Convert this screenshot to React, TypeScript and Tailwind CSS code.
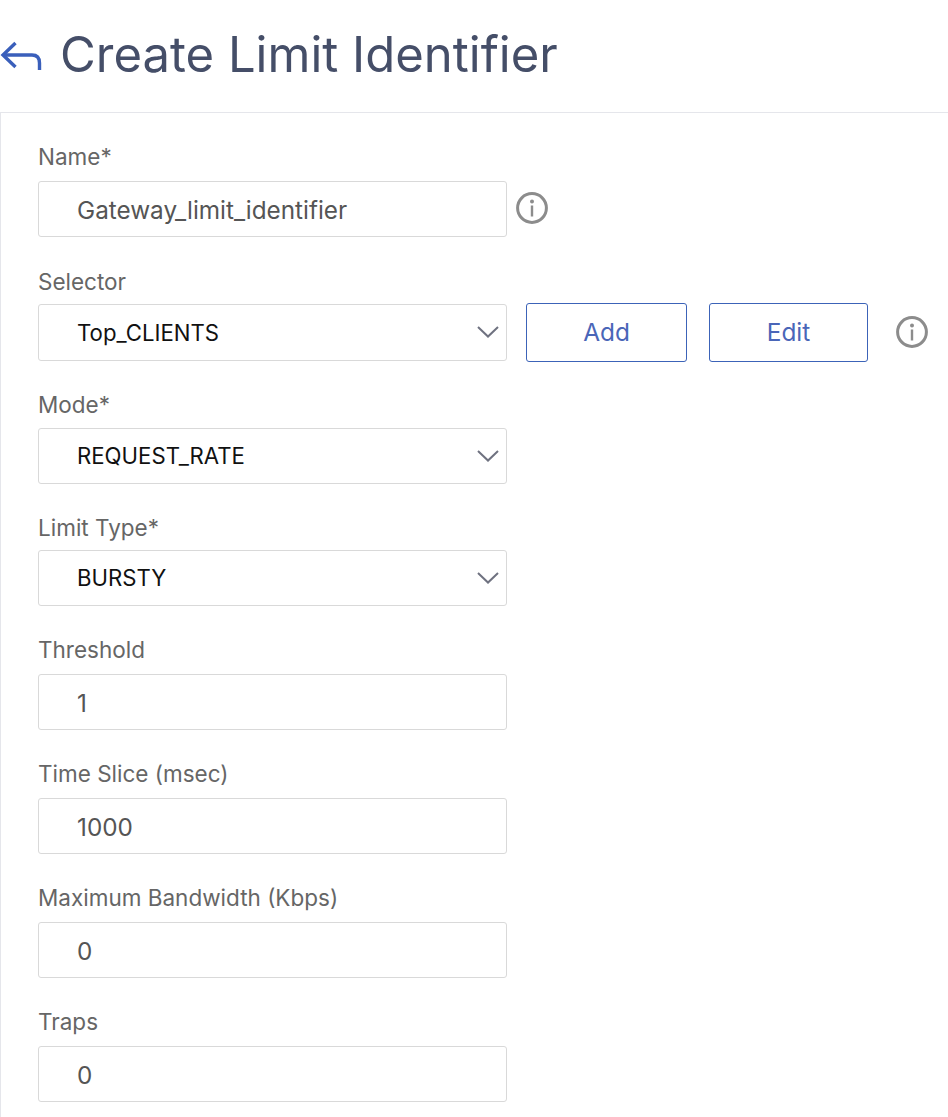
const font = { fontFamily: 'Inter, "Liberation Sans", sans-serif' };

function Info() {
  return (
    <svg width="32" height="32" viewBox="0 0 32 32" fill="none" className="block shrink-0">
      <circle cx="16" cy="16" r="14.4" stroke="#8c8c8c" strokeWidth="3" />
      <circle cx="16" cy="9.5" r="2" fill="#8c8c8c" />
      <rect x="14.8" y="13.5" width="2.4" height="11" fill="#8c8c8c" />
    </svg>
  );
}

function Chevron() {
  return (
    <svg width="22" height="12" viewBox="0 0 22 12" fill="none" className="absolute right-[7px] top-[21px]">
      <path d="M1 1 L11 10.5 L21 1" stroke="#6f7280" strokeWidth="2" />
    </svg>
  );
}

function Field({ label, value, select, h = 56, gap, children, mb }: { label: string; value: string; select?: boolean; h?: number; gap: string; children?: React.ReactNode; mb: string }) {
  return (
    <div className={mb}>
      <div className={`text-[22.5px] leading-[28px] text-[#666666] ${gap}`}>{label}</div>
      <div className="flex items-center">
        <div
          className={`relative w-[469px] shrink-0 flex items-center pl-[38px] border border-[#d9d9d9] rounded-[3px] bg-white ${select ? 'text-[22.2px] text-[#111111]' : 'text-[24.3px] text-[#555555] pt-[2px]'}`}
          style={{ height: h }}
        >
          {value}
          {select && <Chevron />}
        </div>
        {children}
      </div>
    </div>
  );
}

function Btn({ w, ml, children }: { w: string; ml: string; children: string }) {
  return (
    <button className={`${w} ${ml} h-[59px] shrink-0 border border-[#3c63b8] rounded-[3px] bg-white text-[#4a66b8] text-[24.4px]`}>
      {children}
    </button>
  );
}

export default function App() {
  return (
    <div className="w-[948px] h-[1117px] bg-white overflow-hidden" style={font}>
      <div className="h-[113px] flex items-center border-b border-[#e5e6eb]">
        <svg width="44" height="32" viewBox="0 0 44 32" fill="none" className="mt-[2px] shrink-0">
          <path d="M15.5 2 L3 14 L15.5 26" stroke="#3a5fbb" strokeWidth="3.4" />
          <path d="M3 14 H32 Q39.5 14 39.5 22 V29" stroke="#3a5fbb" strokeWidth="3.4" />
        </svg>
        <h1 className="ml-[16px] text-[49px] leading-none text-[#454e68] font-normal -translate-y-[2px]">Create Limit Identifier</h1>
      </div>
      <div className="border-l border-[#e5e6eb] pl-[37px] pt-[30px] h-[1004px]">
        <Field label="Name*" value="Gateway_limit_identifier" gap="mb-[10px]" mb="mb-[31px]">
          <div className="ml-[9px] mb-[2px]"><Info /></div>
        </Field>
        <Field label="Selector" value="Top_CLIENTS" select h={57} gap="mb-[7px]" mb="mb-[29px]">
          <Btn w="w-[161px]" ml="ml-[19px]">Add</Btn>
          <Btn w="w-[159px]" ml="ml-[22px]">Edit</Btn>
          <div className="ml-[28px] mb-px"><Info /></div>
        </Field>
        <Field label="Mode*" value="REQUEST_RATE" select gap="mb-[9px]" mb="mb-[30px]" />
        <Field label="Limit Type*" value="BURSTY" select gap="mb-[8px]" mb="mb-[30px]" />
        <Field label="Threshold" value="1" gap="mb-[10px]" mb="mb-[30px]" />
        <Field label="Time Slice (msec)" value="1000" gap="mb-[10px]" mb="mb-[30px]" />
        <Field label="Maximum Bandwidth (Kbps)" value="0" gap="mb-[10px]" mb="mb-[30px]" />
        <Field label="Traps" value="0" gap="mb-[10px]" mb="mb-0" />
      </div>
    </div>
  );
}
